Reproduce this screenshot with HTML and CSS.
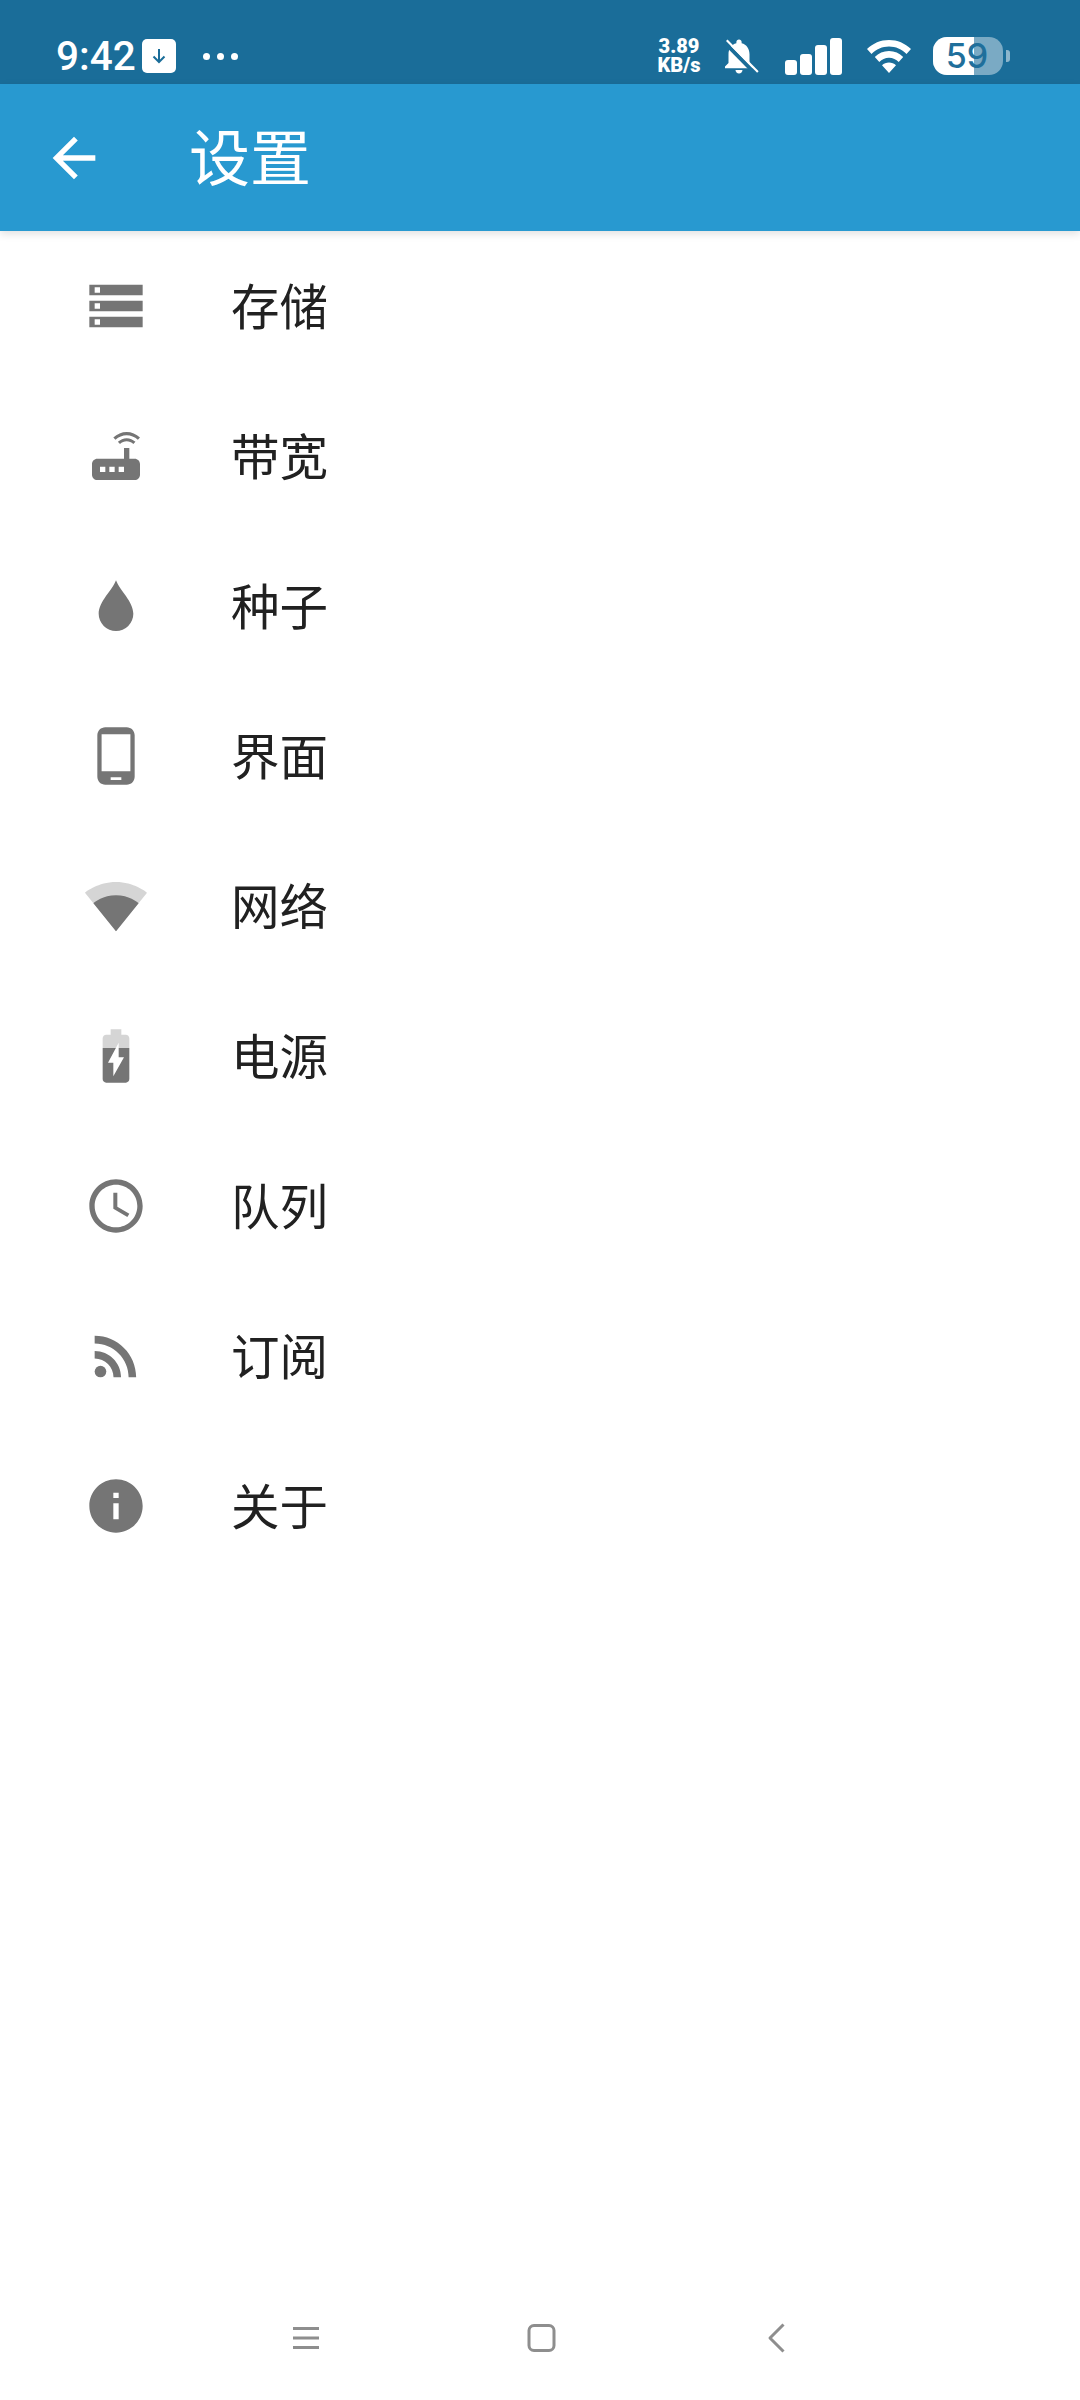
FILE: index.html
```html
<!DOCTYPE html>
<html lang="zh">
<head>
<meta charset="utf-8">
<title>设置</title>
<link rel="stylesheet" href="styles.css">
</head>
<body>
<div class="page">
  <div class="status">
    <span class="time">9:42</span>
    <span class="badge"><svg class="badge-ico" viewBox="0 0 24 24"><path d="M12 5v13M6.500 12.500 12 18l5.500-5.500"/></svg></span>
    <span class="dots"><i></i><i></i><i></i></span>
    <span class="speed"><b>3.89</b><b>KB/s</b></span>
    <svg class="bell" viewBox="0 0 24 24"><path class="w" d="M18 16v-5c0-3.070-1.630-5.640-4.500-6.320V4c0-.83-.67-1.500-1.500-1.500s-1.500.67-1.500 1.500v.68C7.640 5.360 6 7.920 6 11v5l-2 2v1h16v-1l-2-2z"/><path class="w" d="M12 22c1.100 0 2-.9 2-2h-4c0 1.100.9 2 2 2z"/><path class="bell-gap" d="M4 4.500 21 21.800"/><path class="bell-line" d="M5 3 22.800 21.200"/></svg>
    <span class="bars"><i class="b1"></i><i class="b2"></i><i class="b3"></i><i class="b4"></i></span>
    <svg class="swifi" viewBox="0 0 44 33"><path class="w" d="M22 0C13.500 0 6 3.300 0 9l4.500 5C9.300 9.200 15.300 6.500 22 6.500S34.700 9.200 39.500 14L44 9C38 3.300 30.500 0 22 0zM22 11c-5.500 0-10.500 2.200-14.200 6l4.500 5c2.500-2.600 5.900-4.300 9.700-4.300s7.200 1.700 9.700 4.300l4.500-5C32.500 13.200 27.500 11 22 11zM22 22.500c-2.700 0-5.100 1-7 2.800L22 33l7-7.700c-1.900-1.800-4.300-2.800-7-2.800z"/></svg>
    <span class="batt"><span class="batt-fill"></span><span class="batt-num">59</span></span>
    <span class="nub"></span>
  </div>

  <header class="appbar">
    <svg class="back" viewBox="0 0 24 24"><path d="M20 11H7.830l5.590-5.590L12 4l-8 8 8 8 1.410-1.410L7.830 13H20v-2z"/></svg>
    <h1 class="title">设置</h1>
  </header>

  <main class="list">
    <div class="row">
      <svg class="ico" viewBox="0 0 24 24"><path d="M2 20h20v-4H2v4zm2-3h2v2H4v-2zM2 4v4h20V4H2zm4 3H4V5h2v2zm-4 7h20v-4H2v4zm2-3h2v2H4v-2z"/></svg>
      <span class="label">存储</span>
    </div>
    <div class="row">
      <svg class="ico" viewBox="0 0 24 24"><path d="M20.200 5.900l.8-.8C19.600 3.700 17.800 3 16 3s-3.600.7-5 2.100l.8.8C13 4.800 14.500 4.200 16 4.200s3 .6 4.200 1.700zm-.9.8c-.9-.9-2.100-1.400-3.300-1.400s-2.400.5-3.300 1.400l.8.8c.7-.7 1.600-1 2.500-1 .9 0 1.800.3 2.500 1l.8-.8zM19 13h-2V9h-2v4H5c-1.100 0-2 .9-2 2v4c0 1.100.9 2 2 2h14c1.100 0 2-.9 2-2v-4c0-1.100-.9-2-2-2zM8 18H6v-2h2v2zm3.500 0h-2v-2h2v2zm3.500 0h-2v-2h2v2z"/></svg>
      <span class="label">带宽</span>
    </div>
    <div class="row">
      <svg class="ico" viewBox="0 0 24 24"><path d="M12 2.300C10.700 6 5.500 10.200 5.500 14.900a6.500 6.500 0 0 0 13 0C18.500 10.200 13.300 6 12 2.300z"/></svg>
      <span class="label">种子</span>
    </div>
    <div class="row">
      <svg class="ico" viewBox="0 0 24 24"><path fill-rule="evenodd" d="M16 1.200H8c-1.660 0-3 1.340-3 3v15.600c0 1.660 1.340 3 3 3h8c1.660 0 3-1.340 3-3V4.200c0-1.660-1.340-3-3-3zM6.600 3.800h10.800v13.900H6.600zM10 20h4v1h-4z"/></svg>
      <span class="label">界面</span>
    </div>
    <div class="row">
      <svg class="ico" viewBox="0 0 24 24"><path fill-opacity=".3" d="M12.010 21.490L23.640 7c-.45-.34-4.930-4-11.640-4C5.280 3 .81 6.660.36 7l11.630 14.490.01.01.01-.01z"/><path d="M3.530 10.950l8.460 10.540.01.01.01-.01 8.460-10.540C20.040 10.620 16.810 8 12 8c-4.810 0-8.040 2.620-8.470 2.950z"/></svg>
      <span class="label">网络</span>
    </div>
    <div class="row">
      <svg class="ico" viewBox="0 0 24 24"><path fill-opacity=".3" d="M15.670 4H14V2h-4v2H8.330C7.600 4 7 4.600 7 5.330V9h10V5.330C17 4.600 16.400 4 15.670 4z"/><path d="M7 9v11.670C7 21.400 7.600 22 8.330 22h7.340c.73 0 1.330-.6 1.330-1.330V9H7z"/><path class="w" d="M11 19.600v-5.100H9L13 7v5.500h2z"/></svg>
      <span class="label">电源</span>
    </div>
    <div class="row">
      <svg class="ico" viewBox="0 0 24 24"><path d="M11.990 2C6.470 2 2 6.480 2 12s4.470 10 9.990 10C17.520 22 22 17.520 22 12S17.520 2 11.990 2zM12 20c-4.420 0-8-3.580-8-8s3.580-8 8-8 8 3.580 8 8-3.580 8-8 8z"/><path d="M12.500 7H11v6l5.250 3.150.75-1.230-4.500-2.670z"/></svg>
      <span class="label">队列</span>
    </div>
    <div class="row">
      <svg class="ico" viewBox="0 0 24 24"><circle cx="6.180" cy="17.820" r="2.180"/><path d="M4 4.440v2.830c7.030 0 12.730 5.700 12.730 12.730h2.830c0-8.590-6.970-15.560-15.560-15.560zm0 5.660v2.830c3.900 0 7.070 3.170 7.070 7.070h2.830c0-5.470-4.430-9.900-9.900-9.900z"/></svg>
      <span class="label">订阅</span>
    </div>
    <div class="row">
      <svg class="ico" viewBox="0 0 24 24"><path d="M12 2C6.480 2 2 6.480 2 12s4.480 10 10 10 10-4.480 10-10S17.520 2 12 2zm1 15h-2v-6h2v6zm0-8h-2V7h2v2z"/></svg>
      <span class="label">关于</span>
    </div>
  </main>

  <nav class="navbar">
    <svg class="nav-ico" viewBox="0 0 30 30"><path d="M2 5.500h26M2 15h26M2 24.500h26"/></svg>
    <svg class="nav-ico" viewBox="0 0 30 30"><rect x="3" y="2.500" width="25" height="25" rx="5"/></svg>
    <svg class="nav-ico" viewBox="0 0 30 30"><path d="M21.500 1.500 8 15 21.500 28.500"/></svg>
  </nav>
</div>
</body>
</html>
```
FILE: styles.css
```css
* { box-sizing: border-box; }
html, body { margin: 0; padding: 0; }
body { background: #fff; font-family: "Noto Sans CJK SC", "Noto Sans", sans-serif; }
.page { width: 1080px; height: 2400px; display: flex; flex-direction: column; overflow: hidden; }

.status { height: 84px; flex: none; background: #1a6d99; color: #fff; display: flex; align-items: center; padding: 28px 0 0 56px; font-family: Roboto, "Liberation Sans", sans-serif; }
.time { font-size: 40.500px; font-weight: 500; line-height: 56px; width: 86px; }
.badge { width: 34px; height: 34px; background: #fff; border-radius: 5px; display: flex; align-items: center; justify-content: center; }
.badge-ico { width: 24px; height: 24px; fill: none; stroke: #1a6d99; stroke-width: 2; }
.dots { display: flex; gap: 7px; margin-left: 27px; margin-right: 421px; }
.dots i { width: 7px; height: 7px; border-radius: 50%; background: #fff; display: block; }
.speed { display: flex; flex-direction: column; width: 44px; font-size: 20px; line-height: 19px; font-weight: 700; text-align: center; margin-left: -2px; }
.speed b { display: block; white-space: nowrap; }
.bell { width: 42px; height: 42px; margin-left: 17px; }
.w { fill: #fff; }
.bell-gap { stroke: #1a6d99; stroke-width: 2.200; fill: none; }
.bell-line { stroke: #fff; stroke-width: 1.200; fill: none; }
.bars { display: flex; align-items: flex-end; gap: 3px; height: 38px; margin-left: 25px; }
.bars i { display: block; width: 12px; background: #fff; border-radius: 3px; }
.b1 { height: 15px; }
.b2 { height: 21px; }
.b3 { height: 30px; }
.b4 { height: 37px; }
.swifi { width: 44px; height: 33px; margin-left: 25px; }
.batt { position: relative; width: 70px; height: 38px; margin-left: 22px; border-radius: 14px; background: rgba(255,255,255,.42); display: flex; align-items: center; justify-content: center; }
.batt-fill { position: absolute; left: 0; top: 0; bottom: 0; width: 41px; background: #fff; border-radius: 14px 0 0 14px; }
.batt-num { position: relative; color: #1f6f9b; font-size: 34px; font-weight: 500; font-family: Inter, Roboto, sans-serif; line-height: 38px; margin-right: 2px; }
.nub { width: 4px; height: 12px; margin-left: 3px; background: rgba(255,255,255,.5); border-radius: 0 3px 3px 0; }

.appbar { height: 147px; flex: none; background: #2899d0; display: flex; align-items: center; padding-left: 42px; box-shadow: 0 3px 8px rgba(0,0,0,.12); position: relative; }
.back { width: 64px; height: 64px; fill: #fff; }
.title { margin: 0 0 5px 83px; font-size: 61px; font-weight: 400; line-height: 84px; color: #fff; }

.list { flex: 1; }
.row { height: 150px; display: flex; align-items: center; padding-left: 83.500px; gap: 83.500px; }
.ico { width: 64px; height: 64px; fill: #757575; flex: none; }
.label { font-size: 48.500px; line-height: 66px; color: #212121; margin-bottom: 4px; }

.navbar { height: 124px; flex: none; display: flex; justify-content: center; gap: 205.500px; padding: 47px 0 0 2px; }
.nav-ico { width: 30px; height: 30px; fill: none; stroke: #8e8e8e; stroke-width: 3; stroke-linejoin: round; }
```
